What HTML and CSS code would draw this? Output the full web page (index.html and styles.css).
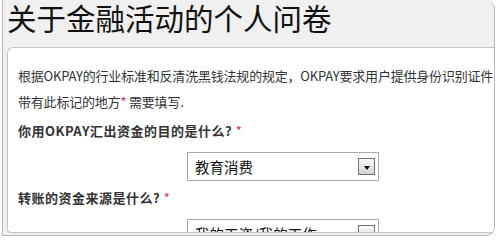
FILE: index.html
```html
<!DOCTYPE html>
<html lang="zh-CN">
<head>
    <meta charset="UTF-8">
    <title>关于金融活动的个人问卷</title>
    <link rel="stylesheet" href="styles.css">
</head>
<body>
<div class="frame">
    <h1 class="title">关于金融活动的个人问卷</h1>
    <div class="panel">
        <p class="intro">根据OKPAY的行业标准和反清洗黑钱法规的规定，OKPAY要求用户提供身份识别证件</p>
        <p class="intro">带有此标记的地方<span class="req">*</span> 需要填写.</p>

        <div class="question">你用OKPAY汇出资金的目的是什么? <span class="req">*</span></div>
        <div class="select">
            <span class="select-value">教育消费</span>
            <span class="select-btn"></span>
        </div>

        <div class="question q2">转账的资金来源是什么? <span class="req">*</span></div>
        <div class="select">
            <span class="select-value">我的工资/我的工作</span>
            <span class="select-btn"></span>
        </div>
    </div>
</div>
</body>
</html>
```

FILE: styles.css
```css
body {
    margin: 0;
    font-family: "Noto Sans CJK SC", sans-serif;
    background: #fff;
}

.frame {
    margin: 0 5px 0 2px;
    height: 236px;
    box-sizing: border-box;
    border: 1px solid #bdb6b6;
    border-top: none;
    border-radius: 0 9px 9px 0;
    background: #f0f0f0;
    overflow: hidden;
}

.title {
    margin: 0;
    padding: 0 0 13px 4px;
    height: 34px;
    font-size: 29.5px;
    line-height: 34px;
    font-weight: normal;
    color: #111;
    white-space: nowrap;
}

.panel {
    margin-left: 4px;
    height: 186px;
    box-sizing: border-box;
    padding: 15px 0 0 10px;
    background: #fff;
    border-top: 1px solid #c9c3c3;
    border-left: 1px solid #c9c3c3;
    border-bottom: 1px solid #c9c3c3;
    border-radius: 6px 0 0 4px;
    white-space: nowrap;
    overflow: hidden;
}

.intro {
    margin: 0;
    font-size: 13px;
    line-height: 26px;
    letter-spacing: -0.2px;
    color: #333;
}

.req {
    color: #e8335a;
    font-weight: normal;
}

.question {
    margin-top: 3px;
    font-size: 13px;
    line-height: 26px;
    font-weight: bold;
    letter-spacing: 0.5px;
    color: #333;
}

.q2 {
    margin-top: 4px;
}

.select {
    margin: 8px 0 0 169px;
    width: 192px;
    height: 29px;
    box-sizing: border-box;
    border: 1px solid #aaa;
    background: #fff;
    display: flex;
    align-items: center;
    justify-content: space-between;
    padding: 0 3px 0 7px;
}

.select-value {
    font-size: 14.5px;
    color: #111;
}

.select-btn {
    width: 17px;
    height: 17px;
    box-sizing: border-box;
    border: 1px solid #6f6f6f;
    background: linear-gradient(#fafafa, #d4d4d4);
    display: flex;
    align-items: center;
    justify-content: center;
}

.select-btn::after {
    content: "";
    border-left: 3.5px solid transparent;
    border-right: 3.5px solid transparent;
    border-top: 4px solid #000;
    margin-top: 2px;
}
```
